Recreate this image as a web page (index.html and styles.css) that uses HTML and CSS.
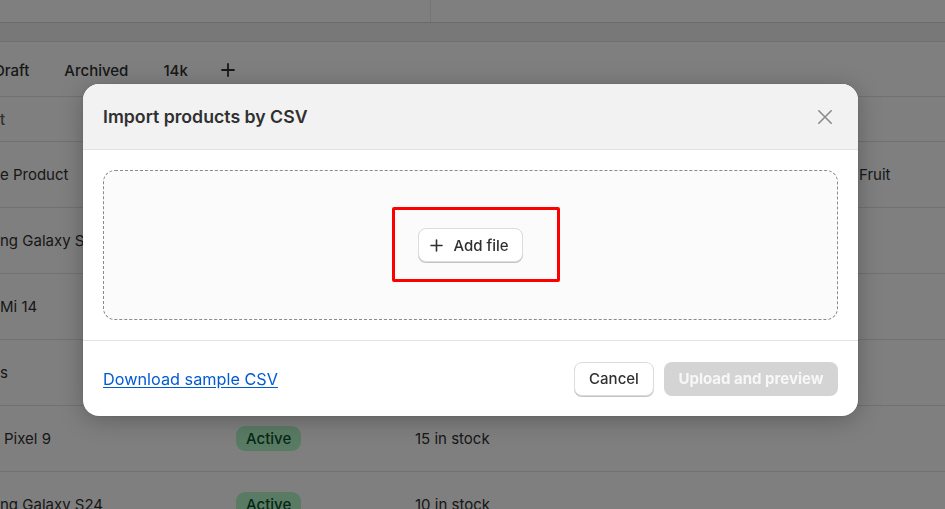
FILE: index.html
```html
<!DOCTYPE html>
<html lang="en">
<head>
<meta charset="utf-8">
<title>Import products by CSV</title>
<link rel="stylesheet" href="styles.css">
</head>
<body>
<div class="page">
  <div class="topcard">
    <div class="topcard-left"></div>
    <div class="topcard-right"></div>
  </div>
  <div class="band"></div>
  <div class="table">
    <div class="tabs">
      <span class="tab tab-first">Draft</span>
      <span class="tab">Archived</span>
      <span class="tab">14k</span>
      <span class="tab tab-plus">
        <svg width="14" height="14" viewBox="0 0 14 14"><path d="M7 1v12M1 7h12" stroke="#303030" stroke-width="1.8" stroke-linecap="round"/></svg>
      </span>
    </div>
    <div class="thead"><span class="c1">t</span></div>
    <div class="row"><span class="c1">e Product</span><span class="c2"></span><span class="c3"></span><span class="c4">Fruit</span></div>
    <div class="row"><span class="c1">ng Galaxy S25</span><span class="c2"></span><span class="c3"></span><span class="c4"></span></div>
    <div class="row"><span class="c1">Mi 14</span><span class="c2"></span><span class="c3"></span><span class="c4"></span></div>
    <div class="row"><span class="c1">s</span><span class="c2"></span><span class="c3"></span><span class="c4"></span></div>
    <div class="row"><span class="c1 shift">Pixel 9</span><span class="c2"><span class="badge">Active</span></span><span class="c3">15 in stock</span><span class="c4"></span></div>
    <div class="row"><span class="c1">ng Galaxy S24</span><span class="c2"><span class="badge">Active</span></span><span class="c3">10 in stock</span><span class="c4"></span></div>
  </div>
</div>

<div class="overlay"></div>

<div class="modal">
  <div class="modal-header">
    <h2 class="modal-title">Import products by CSV</h2>
    <button class="close-btn" aria-label="Close">
      <svg width="16" height="16" viewBox="0 0 16 16"><path d="M1.8 1.8l12.4 12.4M14.2 1.8L1.8 14.2" stroke="#8a8a8a" stroke-width="1.6" stroke-linecap="round"/></svg>
    </button>
  </div>
  <div class="modal-body">
    <div class="dropzone">
      <button class="btn btn-add">
        <svg width="13" height="13" viewBox="0 0 13 13"><path d="M6.5 1v11M1 6.5h11" stroke="#303030" stroke-width="1.6" stroke-linecap="round"/></svg>
        <span>Add file</span>
      </button>
    </div>
  </div>
  <div class="modal-footer">
    <a class="link" href="#">Download sample CSV</a>
    <div class="actions">
      <button class="btn btn-cancel">Cancel</button>
      <button class="btn btn-primary" disabled>Upload and preview</button>
    </div>
  </div>
</div>

<div class="annot"></div>
</body>
</html>
```

FILE: styles.css
```css
* { box-sizing: border-box; }
html, body {
  margin: 0;
  padding: 0;
  width: 945px;
  height: 509px;
  overflow: hidden;
  font-family: Inter, "Noto Sans", sans-serif;
  color: #303030;
  background: #ffffff;
}

/* background page */
.page {
  width: 945px;
}
.topcard {
  height: 23px;
  display: flex;
  background: #ffffff;
  border-bottom: 1px solid #d6d6d6;
}
.topcard-left {
  width: 431px;
  border-right: 1px solid #ebebeb;
}
.topcard-right { flex: 1; }
.band {
  height: 19px;
  background: #f1f1f1;
  border-bottom: 1px solid #dedede;
}
.table {
  background: #ffffff;
}
.tabs {
  height: 55px;
  display: flex;
  align-items: center;
  border-bottom: 1px solid #e3e3e3;
  font-size: 15px;
  font-weight: 500;
  color: #303030;
  padding-top: 2px;
}
.tab { margin-right: 35px; }
.tab-first { margin-left: -6px; }
.tab-plus { display: flex; align-items: center; margin-left: -2px; }
.thead {
  height: 45px;
  display: flex;
  align-items: center;
  border-bottom: 1px solid #e3e3e3;
  font-size: 15px;
  font-weight: 500;
  color: #616161;
}
.row {
  height: 66px;
  display: flex;
  align-items: center;
  border-bottom: 1px solid #e3e3e3;
  font-size: 15px;
  color: #303030;
}
.c1 { width: 236px; white-space: nowrap; overflow: hidden; }
.c1.shift { padding-left: 4px; }
.c2 { width: 179px; }
.c3 { width: 444px; }
.c4 { flex: 1; }
.badge {
  display: inline-block;
  background: #b4f7c6;
  color: #0c5132;
  font-weight: 500;
  font-size: 15px;
  padding: 3px 10px;
  border-radius: 9px;
  line-height: 19px;
}

.overlay {
  position: fixed;
  inset: 0;
  background: rgba(0, 0, 0, 0.5);
}

/* modal */
.modal {
  position: absolute;
  left: 83px;
  top: 84px;
  width: 775px;
  background: #ffffff;
  border-radius: 16px;
  overflow: hidden;
  box-shadow: 0 4px 24px rgba(0, 0, 0, 0.25), 0 0 0 1px rgba(0,0,0,0.04);
}
.modal-header {
  height: 66px;
  background: #f2f2f2;
  border-bottom: 1px solid #e3e3e3;
  display: flex;
  align-items: center;
  justify-content: space-between;
  padding: 0 20px 0 20px;
}
.modal-title {
  margin: 0;
  font-size: 17.7px;
  font-weight: 600;
  color: #303030;
}
.close-btn {
  border: 0;
  background: transparent;
  padding: 0;
  width: 24px;
  height: 24px;
  display: flex;
  align-items: center;
  justify-content: center;
  margin-right: 1px;
}
.modal-body {
  padding: 20px;
  border-bottom: 1px solid #e3e3e3;
}
.dropzone {
  height: 150px;
  border: 1px dashed #8a8a8a;
  border-radius: 12px;
  background: #fbfbfb;
  display: flex;
  align-items: center;
  justify-content: center;
}
.btn {
  font-family: Inter, "Noto Sans", sans-serif;
  font-size: 15px;
  font-weight: 600;
  height: 34px;
  border-radius: 8px;
  display: inline-flex;
  align-items: center;
  justify-content: center;
  cursor: pointer;
}
.btn-add, .btn-cancel {
  background: #ffffff;
  color: #303030;
  border: 1px solid #dcdcdc;
  box-shadow: 0 1px 0 #c4c4c4;
}
.btn-add {
  width: 105px;
  gap: 10px;
  padding: 0 12px 0 10px;
  font-weight: 500;
}
.modal-footer {
  height: 75px;
  display: flex;
  align-items: center;
  justify-content: space-between;
  padding: 0 20px;
}
.link {
  color: #005bd3;
  font-size: 16.25px;
  text-decoration: underline;
  text-underline-offset: 2px;
}
.actions {
  display: flex;
  gap: 10px;
}
.btn-cancel {
  width: 80px;
  font-weight: 500;
}
.btn-primary {
  width: 174px;
  border: 0;
  background: #d4d4d4;
  color: #f7f7f7;
  font-weight: 700;
}

/* annotation */
.annot {
  position: absolute;
  left: 392px;
  top: 207px;
  width: 168px;
  height: 75px;
  border: 3px solid #ff0000;
  border-radius: 2px;
}
```
